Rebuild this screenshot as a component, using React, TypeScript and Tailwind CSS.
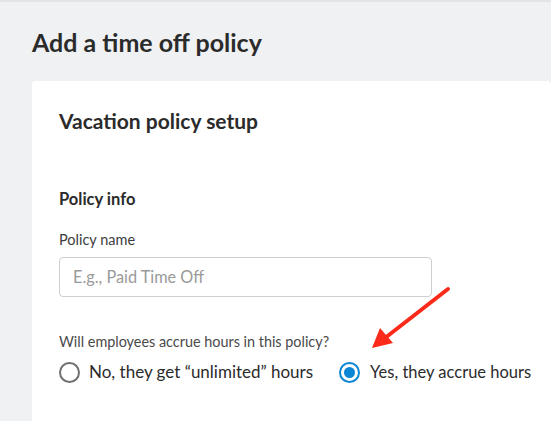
import React from "react";

export default function App() {
  return (
    <div
      className="relative w-[551px] h-[421px] overflow-hidden bg-[#f0f1f3] border-t-2 border-[#e2e4e7]"
      style={{ fontFamily: "Lato, 'Noto Sans', sans-serif" }}
    >
      <div className="pl-8 pt-[24px]">
        <h1 className="text-[25px] leading-[32px] font-bold text-[#2b2b2b]">Add a time off policy</h1>
        <div className="mt-[23px] bg-white rounded-[4px] pl-[27px] pt-[26px] h-[400px]">
          <h2 className="text-[21px] leading-[28px] font-bold text-[#2b2b2b]">Vacation policy setup</h2>
          <h3 className="mt-[53px] text-[16.5px] leading-[22px] font-bold text-[#2b2b2b]">Policy info</h3>
          <label className="block mt-[20px] text-[14.5px] leading-[20px] text-[#3d3d3d]">Policy name</label>
          <div className="mt-[7px] w-[373px] h-[40px] border border-[#cfcfcf] rounded-[4px] flex items-center px-[13px]">
            <span className="text-[16.3px] text-[#9a9a9a]">E.g., Paid Time Off</span>
          </div>
          <p className="mt-[35px] text-[14.4px] leading-[20px] text-[#4a4a4a]">Will employees accrue hours in this policy?</p>
          <div className="mt-[8px] flex items-center">
            <div className="w-[21px] h-[21px] rounded-full border-2 border-[#6f6f6f]" />
            <span className="ml-[9px] text-[17px] leading-[24px] text-[#2b2b2b]">No, they get “unlimited” hours</span>
            <div className="ml-[26px] w-[21px] h-[21px] rounded-full border-2 border-[#0b86d4] flex items-center justify-center">
              <div className="w-[11px] h-[11px] rounded-full bg-[#0b86d4]" />
            </div>
            <span className="ml-[10px] text-[16.5px] leading-[24px] text-[#2b2b2b]">Yes, they accrue hours</span>
          </div>
        </div>
      </div>
      <svg className="absolute left-0 top-0" width="551" height="421" viewBox="0 0 551 421">
        <line x1="448" y1="287" x2="385" y2="336" stroke="#fb2a1a" strokeWidth="4" strokeLinecap="round" />
        <polygon points="372,346 380,326 393,341" fill="#fb2a1a" />
      </svg>
    </div>
  );
}
